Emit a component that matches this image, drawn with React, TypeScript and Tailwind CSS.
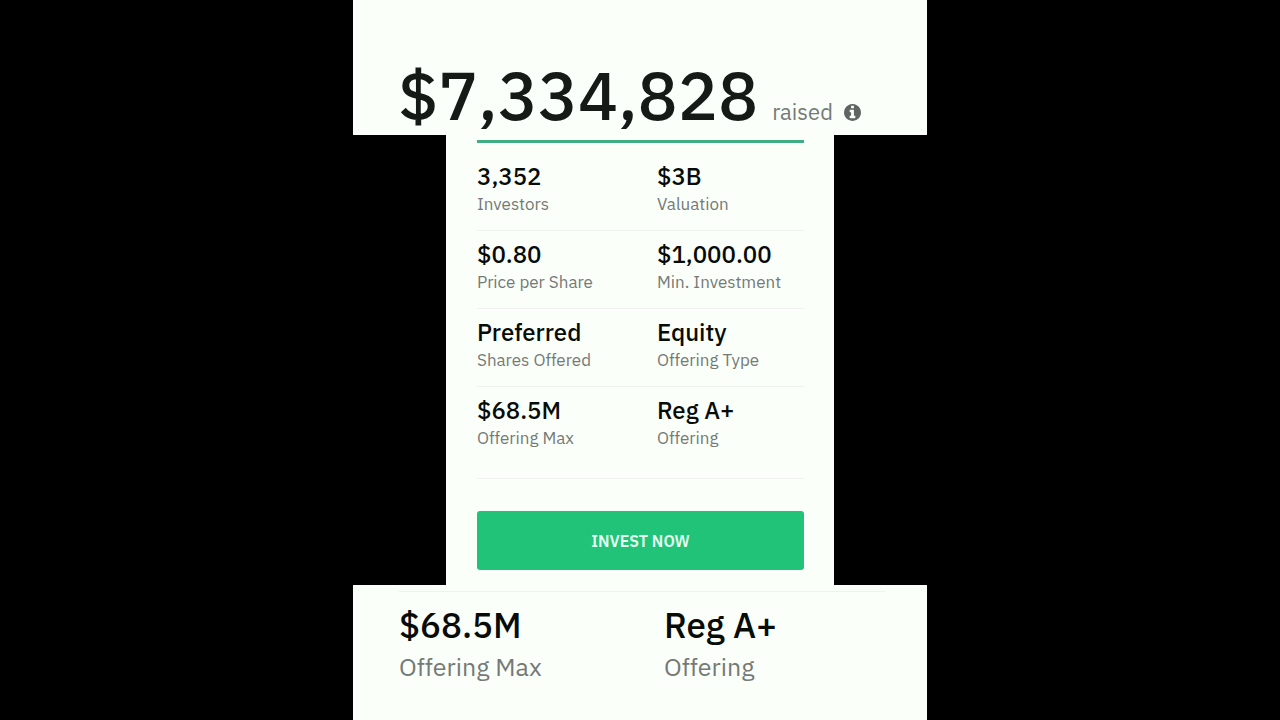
const stats = [
  { value: '3,352', label: 'Investors' },
  { value: '$3B', label: 'Valuation' },
  { value: '$0.80', label: 'Price per Share' },
  { value: '$1,000.00', label: 'Min. Investment' },
  { value: 'Preferred', label: 'Shares Offered' },
  { value: 'Equity', label: 'Offering Type' },
  { value: '$68.5M', label: 'Offering Max' },
  { value: 'Reg A+', label: 'Offering' },
];

function InfoIcon() {
  return (
    <svg viewBox="0 128 1536 1536" className="size-[17px] fill-[#616562]" aria-hidden="true">
      <path d="M1024 1376v-160q0-14-9-23t-23-9h-96v-512q0-14-9-23t-23-9h-320q-14 0-23 9t-9 23v160q0 14 9 23t23 9h96v320h-96q-14 0-23 9t-9 23v160q0 14 9 23t23 9h448q14 0 23-9t9-23zm-128-896v-160q0-14-9-23t-23-9h-192q-14 0-23 9t-9 23v160q0 14 9 23t23 9h192q14 0 23-9t9-23zm640 416q0 209-103 385.5t-279.5 279.5-385.5 103-385.5-103-279.5-279.5-103-385.5 103-385.5 279.5-279.5 385.5-103 385.5 103 279.5 279.5 103 385.5z" />
    </svg>
  );
}

function RaisedHeader() {
  return (
    <header className="flex min-h-[135px] w-[574px] max-w-full items-end bg-[#fbfffa] px-[45px] pb-0.5">
      <h1 className="text-[67px] leading-[76px] font-medium text-[#151a17]">$7,334,828</h1>
      <p className="ml-3.5 flex items-center gap-[11px] pb-1.5 text-[22px] leading-[30px] text-[#757a76]">
        raised
        <button type="button" aria-label="About the amount raised">
          <InfoIcon />
        </button>
      </p>
    </header>
  );
}

function StatCard() {
  return (
    <section className="w-[388px] max-w-full bg-[#fbfffa] pt-[5px] pr-[30px] pb-[15px] pl-[31px]">
      <div className="h-[3px] bg-[#3fae84]" />
      <dl className="grid grid-cols-[180px_1fr] pt-[10px]">
        {stats.map((stat) => (
          <div
            key={stat.label}
            className="border-b border-[#eff2ef] pt-2 pb-[13px] nth-last-[-n+2]:pb-[27px]"
          >
            <dt className="text-[24px] leading-[30px] font-medium text-[#080c09]">{stat.value}</dt>
            <dd className="text-[17px] leading-[26px] text-[#757a76]">{stat.label}</dd>
          </div>
        ))}
      </dl>
      <button
        type="button"
        className="mt-8 h-[59px] w-full rounded-[3px] bg-[#20c378] text-[16px] font-semibold text-[#e6fff0]"
      >
        INVEST NOW
      </button>
    </section>
  );
}

function OfferingFooter() {
  return (
    <footer className="w-[574px] max-w-full grow bg-[#fbfffa] pt-1.5 pr-[42px] pl-[46px]">
      <dl className="grid grid-cols-[265px_1fr] border-t border-[#eff2ef] pt-[11px]">
        {stats.slice(-2).map((stat) => (
          <div key={stat.label}>
            <dt className="text-[35px] leading-[44px] font-medium text-[#080c09]">{stat.value}</dt>
            <dd className="text-[25px] leading-[40px] text-[#757a76]">{stat.label}</dd>
          </div>
        ))}
      </dl>
    </footer>
  );
}

export default function App() {
  return (
    <main className="flex min-h-screen flex-col items-center bg-black font-['IBM_Plex_Sans','Noto_Sans',sans-serif]">
      <RaisedHeader />
      <StatCard />
      <OfferingFooter />
    </main>
  );
}
